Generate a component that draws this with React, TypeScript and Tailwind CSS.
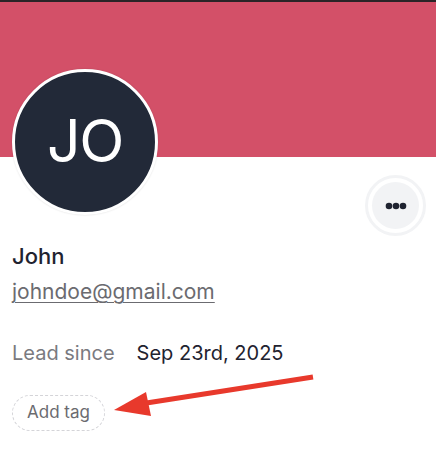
const font = { fontFamily: "Inter, 'Liberation Sans', sans-serif" };

const Dots = () => (
    <svg width="22" height="8" viewBox="0 0 22 8">
        <circle cx="4" cy="4" r="3.3" fill="#1f2330" />
        <circle cx="11" cy="4" r="3.3" fill="#1f2330" />
        <circle cx="18" cy="4" r="3.3" fill="#1f2330" />
    </svg>
);

const MoreButton = () => {
    return (
        <div className="mt-[106px] mr-[10px] flex h-[61px] w-[61px] items-center justify-center rounded-full border-[3px] border-[#f2f3f5] bg-white">
            <button className="flex h-[47px] w-[47px] items-center justify-center rounded-full bg-[#f2f3f5]">
                <Dots />
            </button>
        </div>
    );
};

const App = () => {
    return (
        <div className="relative h-[466px] w-full overflow-hidden bg-white" style={font}>
            {/* Banner */}
            <div className="h-[2px] bg-[#2a2427]" />
            <div className="h-[155px] bg-[#d35068]" />

            {/* Avatar + options */}
            <div className="-mt-[88px] flex items-start justify-between pl-[12px]">
                <div className="flex h-[146px] w-[146px] items-center justify-center rounded-full border-[3px] border-white bg-[#222938] shadow-[0_0_2px_rgba(0,0,0,0.15)]">
                    <span className="pb-[2px] text-[59px] font-normal tracking-tight text-white">JO</span>
                </div>
                <MoreButton />
            </div>

            {/* Details */}
            <div className="flex flex-col px-[12px] pt-[6px]">
                <strong className="text-[22px] font-medium leading-[28px] text-[#1f2330]">John</strong>
                <a className="mt-[8px] text-[21px] leading-[28px] text-[#6b6b70] underline decoration-1 underline-offset-[3px]">
                    johndoe@gmail.com
                </a>
                <div className="mt-[33px] flex items-center gap-[22px] text-[20px] leading-[28px]">
                    <span className="text-[#7a7a80]">Lead since</span>
                    <span className="text-[#1f2330]">Sep 23rd, 2025</span>
                </div>
                <div className="mt-[28px] flex">
                    <button className="flex h-[36px] w-[93px] items-center justify-center rounded-full border border-dashed border-[#d4d4d8] text-[17px] text-[#6b6b70]">
                        Add tag
                    </button>
                </div>
            </div>

            {/* Annotation arrow */}
            <svg className="absolute left-0 top-0" width="436" height="466" viewBox="0 0 436 466">
                <line x1="313" y1="377" x2="140" y2="404" stroke="#e8392c" strokeWidth="5" />
                <polygon points="114,410 146,392 151,416" fill="#e8392c" />
            </svg>
        </div>
    );
};
export default App;
